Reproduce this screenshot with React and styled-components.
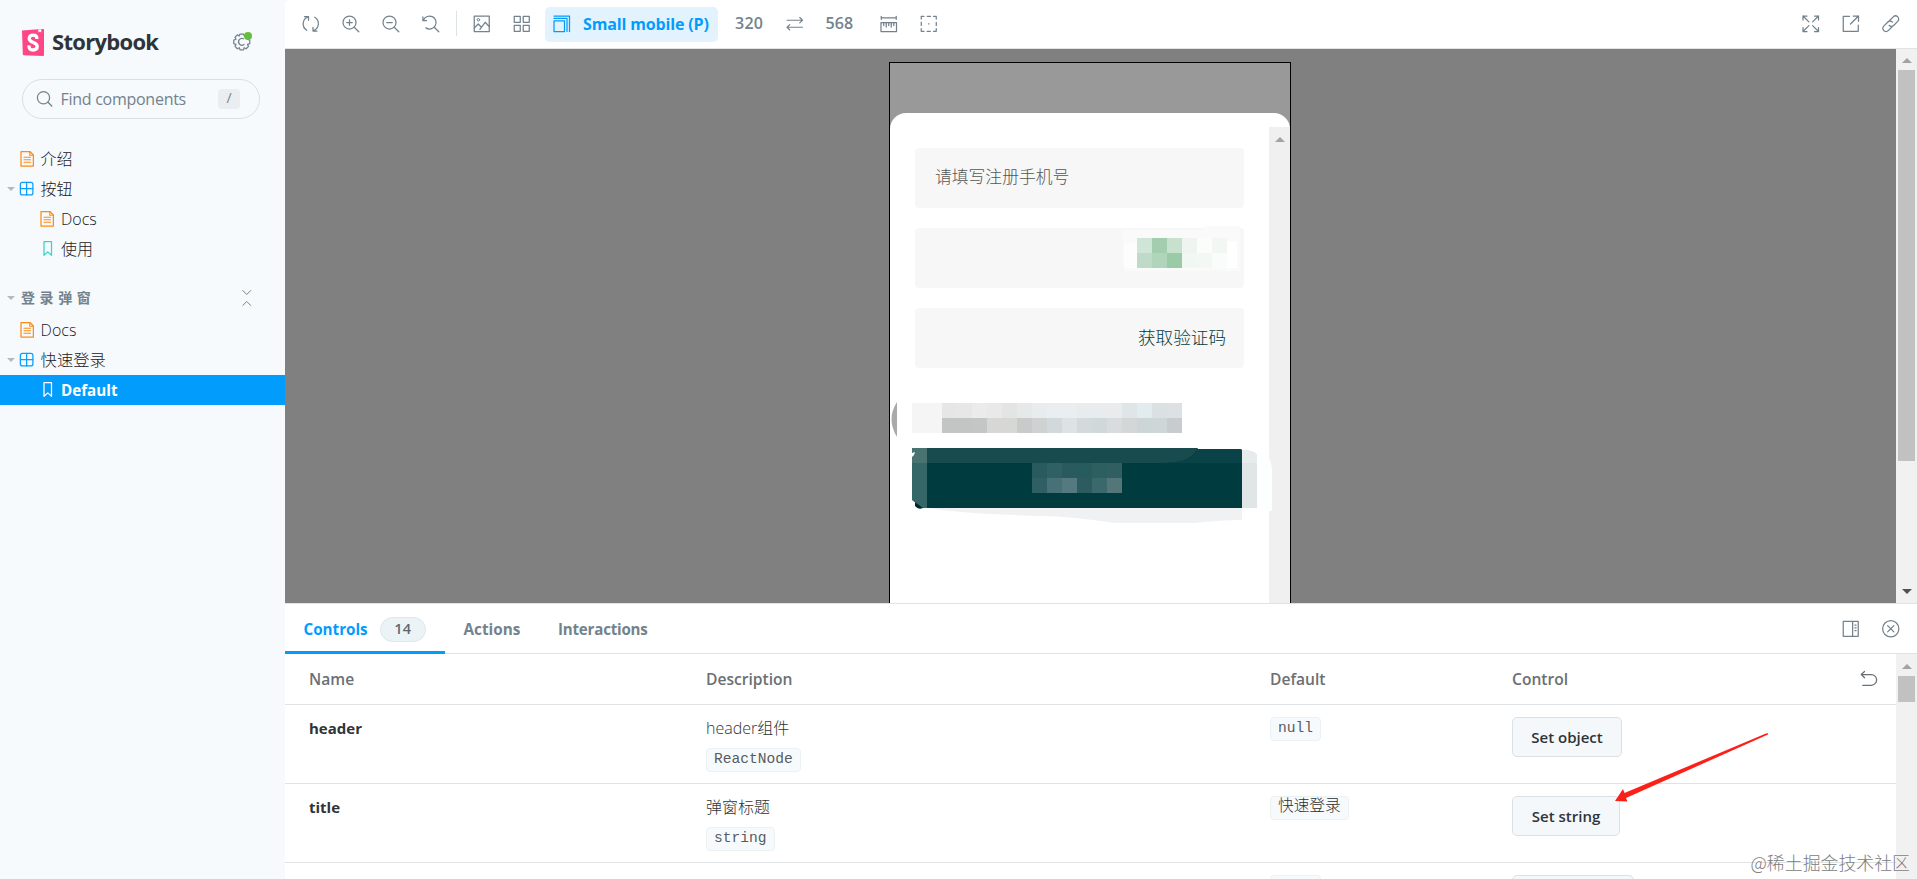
import React from 'react';
import styled, { createGlobalStyle } from 'styled-components';

const GlobalStyle = createGlobalStyle`
  * {
    box-sizing: border-box;
  }
  body {
    margin: 0;
    overflow: hidden;
    background: #f6fafd;
    color: #2e3438;
    font-family: 'Open Sans', 'Noto Sans CJK SC', sans-serif;
    font-size: 16px;
  }
`;

const Layout = styled.div`
  display: grid;
  grid-template-columns: 285px 1fr;
  position: relative;
  height: 879px;
  overflow: hidden;
`;

const Label = styled.span`
  font-size: ${(props) => props.size || 16}px;
  font-weight: ${(props) => props.weight || 400};
  letter-spacing: ${(props) => props.track || 0}px;
  line-height: 20px;
  white-space: nowrap;
`;

const IconSvg = styled.svg`
  display: block;
  flex: none;
  width: 17.5px;
  height: 17.5px;
  fill: none;
  stroke: currentColor;
  overflow: visible;
`;

const Icon = ({ children, ...rest }) => (
  <IconSvg viewBox="0 0 14 14" strokeLinecap="round" strokeLinejoin="round" {...rest}>
    {children}
  </IconSvg>
);

/* ---------- Sidebar ---------- */

const Sidebar = styled.aside`
  background: #f6fafd;
  padding-top: 28px;
`;

const Brand = styled.div`
  display: flex;
  align-items: center;
  height: 28px;
  padding: 0 35px 0 22px;
`;

const BrandName = styled.h1`
  flex: 1;
  margin: 0 0 0 8px;
  font-size: 22px;
  font-weight: 750;
  letter-spacing: -0.7px;
  line-height: 27px;
  padding-bottom: 1px;
`;

const Settings = styled.div`
  position: relative;
  color: #73828c;
`;

const UpdateDot = styled.i`
  position: absolute;
  top: -1px;
  right: -2px;
  width: 8px;
  height: 8px;
  border-radius: 50%;
  background: #66bf3c;
`;

const Search = styled.div`
  display: flex;
  align-items: center;
  width: 238px;
  height: 40px;
  margin: 23px 0 25px 22px;
  padding: 0 19px 0 13px;
  border: 1px solid #d9dfe3;
  border-radius: 20px;
  color: #73828c;

  ${Label} {
    flex: 1;
    margin-left: 7px;
  }
`;

const Key = styled.kbd`
  width: 22px;
  height: 20px;
  border-radius: 4px;
  background: #eaeef0;
  font: 14px/18px 'Open Sans', sans-serif;
  text-align: center;
`;

const TreeRow = styled.div`
  display: flex;
  align-items: center;
  height: 30px;
  padding-left: ${(props) => (props.depth ? 38 : 7)}px;
  background: ${(props) => (props.selected ? '#029cfd' : 'transparent')};
  color: ${(props) => (props.selected ? '#fff' : '#1c2023')};

  ${IconSvg} {
    margin-left: ${(props) => (props.depth ? 1 : 2.6)}px;
    margin-right: 4.5px;
    color: ${(props) => props.tint};
  }
`;

const Caret = styled.i`
  width: 0;
  margin-right: 1px;
  border: 4px solid transparent;
  border-top: 4px solid #b3babf;
  border-bottom: 0;
  visibility: ${(props) => (props.shown ? 'visible' : 'hidden')};
`;

const TreeHeading = styled.div`
  display: flex;
  align-items: center;
  height: 35px;
  margin-top: 16px;
  padding: 0 30px 0 7px;
  color: #73828c;

  ${Label} {
    flex: 1;
    margin-left: 5px;
  }
`;

const glyphs = {
  doc: (
    <>
      <path d="M1.6 1.2h7.1l2.8 2.8v8.8H1.6z" />
      <path d="M8.6 1.4v2.8h2.7M4 5.8h5.2M4 7.8h5.2M4 9.8h5.2" strokeWidth=".9" />
    </>
  ),
  component: (
    <>
      <rect x="1.1" y="1.9" width="10" height="10" rx="1.6" />
      <path d="M6.1 1.9v10M1.1 6.9h10" />
    </>
  ),
  story: <path d="M4 1.3h6v10.9L7 9.5l-3 2.7z" />,
};

const TreeItem = ({ glyph, tint, depth, selected, open, children, size }) => (
  <TreeRow depth={depth} selected={selected} tint={tint}>
    {!depth && <Caret shown={open} />}
    <Icon>{glyphs[glyph]}</Icon>
    <Label size={size} weight={selected ? 700 : 300}>{children}</Label>
  </TreeRow>
);

/* ---------- Toolbar ---------- */

const Main = styled.main`
  display: flex;
  flex-direction: column;
  min-width: 0;
`;

const Toolbar = styled.header`
  display: flex;
  align-items: center;
  height: 49px;
  padding: 0 18px 1px 17px;
  background: #fff;
  border-bottom: 1px solid #dfe3e6;
  border-top-left-radius: 5px;
  color: #73828c;
`;

const ToolGroup = styled.div`
  display: flex;
  align-items: center;
  gap: ${(props) => props.gap || 22.4}px;
  margin-left: ${(props) => props.before || 0}px;
`;

const Dimension = styled(Label)`
  margin-top: -2px;
`;

const Divider = styled.i`
  width: 1px;
  height: 25px;
  margin: 0 16px 0 17px;
  background: #dde2e5;
`;

const SizeButton = styled.button`
  display: flex;
  align-items: center;
  gap: 13px;
  width: 173px;
  height: 35px;
  margin: 1px 17.5px 0 14px;
  padding: 0 0 1px 8px;
  border: 0;
  border-radius: 5px;
  background: #e2f3fe;
  color: #029cfd;
  font-family: inherit;
`;

const Spacer = styled.div`
  flex: 1;
`;

/* ---------- Preview ---------- */

const Preview = styled.section`
  display: flex;
  height: 554px;
  background: #808080;
`;

const Stage = styled.div`
  flex: 1;
  padding: 13px 0 0 604px;
`;

const Device = styled.div`
  width: 402px;
  height: 541px;
  padding-top: 50px;
  border: 1px solid #000;
  border-bottom: 0;
  background: #999;
`;

const Sheet = styled.div`
  display: flex;
  align-items: flex-start;
  height: 490px;
  border-radius: 16px 16px 0 0;
  background: #fff;
`;

const Form = styled.div`
  display: flex;
  flex-direction: column;
  gap: 20px;
  width: 379px;
  padding-top: 35px;
`;

const Field = styled.div`
  display: flex;
  align-items: center;
  justify-content: ${(props) => props.align || 'flex-start'};
  width: 329px;
  height: 60px;
  margin-left: 25px;
  padding: 0 18px 0 20px;
  border-radius: 4px;
  background: #f7f7f7;
  color: ${(props) => props.ink || '#555'};

  ${Label} {
    margin-top: -3px;
  }
`;

const MaskSvg = styled.svg`
  display: block;
  position: relative;
  flex: none;
  overflow: visible;
`;

const SheetTrack = styled.div`
  display: flex;
  align-items: flex-start;
  justify-content: center;
  width: 21px;
  height: 476px;
  margin-top: 14px;
  padding-top: 10px;
  background: #f0f0f0;
`;

const ScrollTrack = styled.div`
  display: flex;
  flex-direction: column;
  align-items: center;
  width: 21px;
  height: 100%;
  padding: ${(props) => props.top}px 0 9px;
  background: #f1f1f1;
`;

const ScrollArrow = styled.i`
  border: 5px solid transparent;
  border-${(props) => (props.down ? 'top' : 'bottom')}-color: ${(props) => (props.down ? '#505050' : '#a3a3a3')};
  border-${(props) => (props.down ? 'bottom' : 'top')}: 0;
`;

const ScrollThumb = styled.div`
  width: 17px;
  height: ${(props) => props.length}px;
  margin-top: 7px;
  margin-bottom: auto;
  background: #c1c1c1;
`;

const upper = ['e6e6e6', 'e7e7e7', 'ebebeb', 'e9e9e9', 'e3e4e4', 'e6e9e9', 'e8ecec', 'ebeef0', 'ebeef0', 'e9eced', 'e9ecee', 'e9ebed', 'e0e6e8', 'e2ecee', 'dbe0e2', 'dde1e3'];
const lower = ['c3c4c4', 'c3c4c4', 'c4c5c5', 'd7d7d6', 'd7d7d6', 'c8cbca', 'ced2d2', 'd2d9da', 'dde2e4', 'd4dadc', 'd0d8da', 'd8dcdd', 'd3d7d7', 'ccd6d6', 'ced6d6', 'c7cdce'];
const captionTop = ['285a5e', '2f6063', '295a5d', '285b5d', '2e5f60', '315f61'];
const captionBottom = ['2f5f62', '477176', '547a80', '2c5c60', '3a686b', '557679'];

const Tiles = ({ x, y, colors }) => colors.map((color, i) => (
  <rect key={x + i * 15} x={x + i * 15} y={y} width="15" height="15" fill={`#${color}`} />
));

const CodeMask = () => (
  <MaskSvg width="120" height="48" viewBox="1106 234 120 48" shapeRendering="crispEdges">
    <path d="M1122 230h82v-4h36v45h-116z" fill="#fafafa" />
    <path d="M1124 243h13v25h-13zM1197 238h16v30h-16z" fill="#fdfdfd" />
    <Tiles x={1137} y={238} colors={['cfe5d8', 'a4ccae', 'c7e1ce', 'eff4f0', 'fbfdfb', 'f3f7f4']} />
    <Tiles x={1137} y={253} colors={['c0dac9', 'b0d5ba', '9acaa6', 'f1f7f3', 'f4f8f5', 'fafcfb']} />
    <rect x="1227" y="241" width="10" height="27" fill="#fff" />
  </MaskSvg>
);

const SubmitMask = () => (
  <MaskSvg width="379" height="140" viewBox="890 388 379 140">
    <path d="M897 402q-11 17 0 35z" fill="#aaa" />
    <rect x="912" y="403" width="30" height="30" fill="#f5f5f5" />
    <Tiles x={942} y={403} colors={upper} />
    <Tiles x={942} y={418} colors={lower} />
    <path d="M1257 450q16 3 15 24v37h-18z" fill="#fdfefe" />
    <path d="M928 508h314v12q-20 0-48 3h-78q-42-6-72-7-80-2-116-8z" fill="#f0f1f3" />
    <path d="M912 449h328q2 0 2 2v57H912z" fill="#003b3f" />
    <path d="M912 448h286q-7 15-33 15H912z" fill="#174b4e" />
    <path d="M1198 449h42q2 0 2 2v12h-77q27-1 33-14z" fill="#0a4347" />
    <path d="M912 463h15v45h-8l-7-8z" fill="#356668" />
    <path d="M912 448h15v15h-15z" fill="#487371" />
    <path d="M912 453l3-1-1 3-2 2zM912 500l10 8h-10z" fill="#fff" />
    <path d="M915 502l8 6q-5 2-8-2z" fill="#00282c" />
    <path d="M1242 450q12 0 15 5v53h-15z" fill="#e0e5e6" />
    <path d="M1242 450q12 0 15 5v8h-15z" fill="#e7ebeb" />
    <Tiles x={1032} y={463} colors={captionTop} />
    <Tiles x={1032} y={478} colors={captionBottom} />
  </MaskSvg>
);

/* ---------- Addon panel ---------- */

const Panel = styled.section`
  display: flex;
  flex-direction: column;
  height: 276px;
  border-top: 1px solid #dfe3e6;
  background: #fff;
`;

const Tabs = styled.nav`
  display: flex;
  height: 50px;
  padding-right: 18px;
  border-bottom: 1px solid #dfe3e6;
  color: #73828c;
`;

const Tab = styled.div`
  display: flex;
  align-items: center;
  height: 50px;
  width: ${(props) => props.width}px;
  padding: 0 0 0 18.5px;
  color: ${(props) => (props.active ? '#029cfd' : '#73828c')};
  border-bottom: 3px solid ${(props) => (props.active ? '#029cfd' : 'transparent')};
  border-top: 3px solid transparent;
`;

const Count = styled.span`
  width: 46px;
  height: 25px;
  margin-left: 12px;
  border: 1px solid #e0e6ea;
  border-radius: 13px;
  background: #ecf3f6;
  color: #5c6870;
  font-size: 14.5px;
  font-weight: 600;
  line-height: 22px;
  text-align: center;
`;

const PanelBody = styled.div`
  display: flex;
  flex: 1;
  min-height: 0;
`;

const Table = styled.div`
  flex: 1;
  overflow: hidden;
`;

const Row = styled.div`
  display: grid;
  grid-template-columns: 397px 564px 242px 1fr;
  align-items: start;
  height: 79px;
  padding: 12px 19px 0 24px;
  border-bottom: 1px solid #dfe3e6;
`;

const HeadRow = styled(Row)`
  align-items: center;
  height: 51px;
  padding-top: 0;
  padding-bottom: 1px;
  color: #6a7074;
`;

const HeadCell = styled.div`
  display: flex;
  align-items: center;
  justify-content: space-between;
`;

const Cell = styled.div`
  display: flex;
  flex-direction: column;
  align-items: flex-start;
  gap: ${(props) => props.gap || 0}px;
  padding-top: ${(props) => props.top || 0}px;
`;

const Code = styled.code`
  height: 24px;
  padding: 0 7px;
  min-width: 51px;
  border: 1px solid #ecf1f4;
  border-radius: 4px;
  background: #f7fafc;
  color: #565c60;
  font-family: 'Liberation Mono', 'Noto Sans CJK SC', monospace;
  font-size: ${(props) => props.size || 14.6}px;
  font-weight: 300;
  line-height: 20px;
`;

/* Values in CJK are set darker, as their strokes are thinner. */
const ValueCode = styled(Code)`
  color: ${(props) => (props.size ? '#2a2e31' : '#565c60')};
`;

const SetButton = styled.button`
  width: ${(props) => props.width}px;
  height: 40px;
  padding: 0 0 1px;
  border: 1px solid #d9e1e7;
  border-radius: 5px;
  background: #f4f8fb;
  color: #2e3438;
  font-family: inherit;
`;

const ArrowMark = styled.svg`
  position: absolute;
  left: 1610px;
  top: 728px;
`;

const Watermark = styled.div`
  position: absolute;
  right: 7px;
  bottom: 4px;
  color: #7c7c7c;
  font: 300 17.9px/26px 'Noto Sans CJK SC', sans-serif;
  text-shadow: 0 0 1px #fff;
  white-space: nowrap;
`;

const rows = [
  { name: 'header', desc: 'header组件', type: 'ReactNode', value: 'null', action: 'Set object', width: 110 },
  { name: 'title', desc: '弹窗标题', type: 'string', value: '快速登录', valueSize: 15.7, action: 'Set string', width: 108 },
  { name: '', desc: '', type: '', value: '', action: '', width: 122 },
];

const App = () => (
  <>
    <GlobalStyle />
    <Layout>
      <Sidebar>
        <Brand>
          <svg width="22" height="27" viewBox="0 0 22 27">
            <path d="M0 1.6 21-.1q1 0 1 1V26q0 1-1 1L1.8 26.2q-1 0-1-1z" fill="#ff4785" />
            <path d="M16.4.4l2.8-.2.1 3.3-1.4-1.1-1.6 1.2z" fill="#fff" />
            <path d="M14.9 10c.1-2.8-1.2-3.9-3.7-3.9-2.6 0-4 1.4-4 3.4 0 4.6 8 3.5 8 7.8 0 2.3-1.5 3.7-4.1 3.7-3 0-4.3-1.6-4.1-4.6" fill="none" stroke="#fff" strokeWidth="3.3" />
          </svg>
          <BrandName>Storybook</BrandName>
          <Settings>
            <Icon>
              <path d="M5.6.2h2.8l.5 1.5 1.6-.8 1.9 1.9-.8 1.6 1.8.7v2.8l-1.8.6.8 1.6-1.9 1.9-1.6-.8-.5 1.7H5.6l-.5-1.7-1.6.8-1.9-1.9.8-1.6L.6 7.9V5.1l1.8-.7-.8-1.6L3.5.9l1.6.8z" transform="translate(0 .6)" />
              <path d="M8.8 9.2A2.7 2.7 0 1 1 8.3 4.6" />
            </Icon>
            <UpdateDot />
          </Settings>
        </Brand>
        <Search>
          <Icon>
            <circle cx="6" cy="6.2" r="4.9" />
            <path d="m9.6 9.8 3 3" />
          </Icon>
          <Label track={-0.27}>Find components</Label>
          <Key>/</Key>
        </Search>
        <TreeItem glyph="doc" tint="#fb8c14">介绍</TreeItem>
        <TreeItem glyph="component" tint="#0e9ffb" open>按钮</TreeItem>
        <TreeItem glyph="doc" tint="#fb8c14" depth={1}>Docs</TreeItem>
        <TreeItem glyph="story" tint="#37d5c3" depth={1}>使用</TreeItem>
        <TreeHeading>
          <Caret shown />
          <Label size={14} weight={700} track={4.6}>登录弹窗</Label>
          <Icon>
            <path d="M3.8 1.2 7 4.4l3.2-3.2M3.8 13.2 7 10l3.2 3.2" strokeWidth=".8" />
          </Icon>
        </TreeHeading>
        <TreeItem glyph="doc" tint="#fb8c14">Docs</TreeItem>
        <TreeItem glyph="component" tint="#0e9ffb" size={16.3} open>快速登录</TreeItem>
        <TreeItem glyph="story" tint="#fff" depth={1} size={15.2} selected>Default</TreeItem>
      </Sidebar>

      <Main>
        <Toolbar>
          <ToolGroup>
            <Icon>
              <path d="M2 1.2h3.2v3M5 1.4A6 6 0 0 0 3.8 12.2M12 12.8H8.8v-3M9 12.6A6 6 0 0 0 10.2 1.8" />
            </Icon>
            <Icon>
              <circle cx="6" cy="6" r="5.2" />
              <path d="m9.8 9.8 3.6 3.6M6 3.8v4.4M3.8 6h4.4" />
            </Icon>
            <Icon>
              <circle cx="6" cy="6" r="5.2" />
              <path d="m9.8 9.8 3.6 3.6M3.8 6h4.4" />
            </Icon>
            <Icon>
              <path d="M.7 1.5v3h3M1.2 4.2A5.2 5.2 0 1 1 3.1 10.3M9.8 9.8l3.6 3.6" />
            </Icon>
          </ToolGroup>
          <Divider />
          <ToolGroup>
            <Icon>
              <rect x="1" y=".8" width="12" height="12.4" />
              <circle cx="4.3" cy="3.8" r="1" strokeWidth=".8" />
              <path d="m1 10.5 3.2-3.3 2.5 2.6 3-4L13 9.2M5.5 11.5l1.3-1.7" />
            </Icon>
            <Icon>
              <path d="M1 1h4.8v4.8H1zM8.2 1H13v4.8H8.2zM1 8.2h4.8V13H1zM8.2 8.2H13V13H8.2z" />
            </Icon>
          </ToolGroup>
          <SizeButton>
            <Icon>
              <path d="M.8 4.7h8.4v8.5H.8zM.8 2.7h10.4v10.4M.8.8h12.4v12.4" />
            </Icon>
            <Label weight={700} track={-0.15}>Small mobile (P)</Label>
          </SizeButton>
          <ToolGroup gap={22.4}>
            <Dimension weight={600} track={0.2}>320</Dimension>
            <Icon>
              <path d="M.8 4.2h12.4M11 2l2.2 2.2L11 6.3M13.2 9.8H.8M3 7.7.8 9.8 3 12" strokeWidth=".9" />
            </Icon>
            <Dimension weight={600} track={0.2}>568</Dimension>
          </ToolGroup>
          <ToolGroup before={26.3}>
            <Icon>
              <path d="M1 2.2h12M1 1v2.4M13 1v2.4M.8 6h12.4v7.2H.8zM3 6.2v2.2M5 6.2v3.4M7 6.2v2.2M9 6.2v3.4M11 6.2v2.2" />
            </Icon>
            <Icon>
              <path d="M1 3.2V1h2.2M5.8 1h2.6M10.8 1H13v2.2M13 5.8v2.6M13 10.8V13h-2.2M8.3 13H5.7M3.2 13H1v-2.2M1 8.3V5.7M6.8 7h.4" />
            </Icon>
          </ToolGroup>
          <Spacer />
          <ToolGroup>
            <Icon>
              <path d="M.8 4V.8H4M.8.8l4.7 4.7M10 .8h3.2V4M13.2.8 8.5 5.5M.8 10v3.2H4M.8 13.2l4.7-4.7M10 13.2h3.2V10M13.2 13.2 8.5 8.5" />
            </Icon>
            <Icon>
              <path d="M6 1H1v12h12V8M9 .8h4.2V5M13.2.8 6.8 7.2" />
            </Icon>
            <Icon>
              <path d="M5.9 4.6 9 1.5a2.5 2.5 0 0 1 3.6 3.6L9.3 8.4a2.5 2.5 0 0 1-3.6 0M8.1 9.4 5 12.5a2.5 2.5 0 0 1-3.6-3.6l3.3-3.3a2.5 2.5 0 0 1 3.6 0" />
            </Icon>
          </ToolGroup>
        </Toolbar>

        <Preview>
          <Stage>
            <Device>
              <Sheet>
                <Form>
                  <Field><Label size={16.8} weight={300}>请填写注册手机号</Label></Field>
                  <Field align="flex-end"><CodeMask /></Field>
                  <Field align="flex-end" ink="#003b3f"><Label size={17.6} weight={300}>获取验证码</Label></Field>
                  <SubmitMask />
                </Form>
                <SheetTrack><ScrollArrow /></SheetTrack>
              </Sheet>
            </Device>
          </Stage>
          <ScrollTrack top={9}>
            <ScrollArrow />
            <ScrollThumb length={391} />
            <ScrollArrow down />
          </ScrollTrack>
        </Preview>

        <Panel>
          <Tabs>
            <Tab width={160} active>
              <Label weight={700} size={15.2}>Controls</Label>
              <Count>14</Count>
            </Tab>
            <Tab width={94.5}><Label weight={700} size={15.3}>Actions</Label></Tab>
            <Tab width={120}><Label weight={700} size={15.1} track={-0.2}>Interactions</Label></Tab>
            <Spacer />
            <ToolGroup>
              <Icon>
                <path d="M1 1h12v12H1zM8.5 1v12M10.3 4h1M10.3 6.2h1M10.3 8.4h1" />
              </Icon>
              <Icon>
                <circle cx="7" cy="7" r="6.5" />
                <path d="m4.5 4.5 5 5M9.5 4.5l-5 5" />
              </Icon>
            </ToolGroup>
          </Tabs>
          <PanelBody>
            <Table>
              <HeadRow>
                <HeadCell><Label weight={600} size={15.6}>Name</Label></HeadCell>
                <HeadCell><Label weight={600} size={15.6}>Description</Label></HeadCell>
                <HeadCell><Label weight={600} size={15.6}>Default</Label></HeadCell>
                <HeadCell>
                  <Label weight={600} size={15.6}>Control</Label>
                  <Icon>
                    <path d="M3.6 1.2 1 3.6l2.6 2.6M1.2 3.6H9a4.2 4.2 0 0 1 0 8.6H2.2" />
                  </Icon>
                </HeadCell>
              </HeadRow>
              {rows.map((row) => (
                <Row key={row.width}>
                  <Cell top={1}><Label weight={700} size={15}>{row.name}</Label></Cell>
                  <Cell top={1} gap={10}>
                    <Label weight={300}>{row.desc}</Label>
                    {row.type && <Code>{row.type}</Code>}
                  </Cell>
                  <Cell><ValueCode size={row.valueSize}>{row.value}</ValueCode></Cell>
                  <Cell>
                    <SetButton width={row.width}><Label size={15} weight={600}>{row.action}</Label></SetButton>
                  </Cell>
                </Row>
              ))}
            </Table>
            <ScrollTrack top={10}>
              <ScrollArrow />
              <ScrollThumb length={26} />
            </ScrollTrack>
          </PanelBody>
        </Panel>
      </Main>

      <ArrowMark width="162" height="78" viewBox="1610 728 162 78">
        <path d="M1615 801 1623 789l1.5 4L1766 733.5q3-1 2 1L1626 798l1.5 3.5z" fill="#fb2018" />
      </ArrowMark>
      <Watermark>@稀土掘金技术社区</Watermark>
    </Layout>
  </>
);

export default App;
